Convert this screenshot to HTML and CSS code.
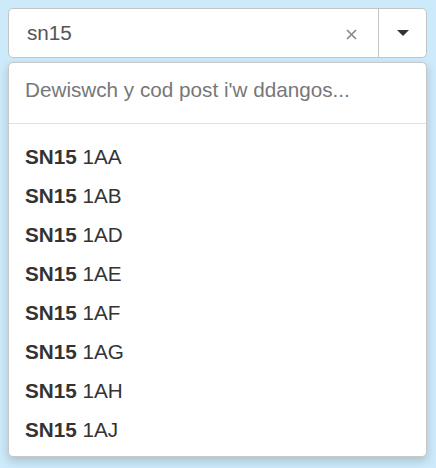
FILE: index.html
```html
<!DOCTYPE html>
<html>
<head>
<meta charset="utf-8">
<link rel="stylesheet" href="styles.css">
</head>
<body>
<div class="combo">
  <div class="field">
    <span class="value">sn15</span>
    <svg class="clear" width="11" height="11" viewBox="0 0 11 11" aria-label="clear"><path d="M1 1 L10 10 M10 1 L1 10" stroke="#8a8a8a" stroke-width="1.7" fill="none"/></svg>
  </div>
  <div class="toggle"><span class="caret"></span></div>
</div>
<div class="panel">
  <div class="search">Dewiswch y cod post i'w ddangos...</div>
  <ul class="list">
    <li><b>SN15</b> 1AA</li>
    <li><b>SN15</b> 1AB</li>
    <li><b>SN15</b> 1AD</li>
    <li><b>SN15</b> 1AE</li>
    <li><b>SN15</b> 1AF</li>
    <li><b>SN15</b> 1AG</li>
    <li><b>SN15</b> 1AH</li>
    <li><b>SN15</b> 1AJ</li>
  </ul>
</div>
</body>
</html>
```
FILE: styles.css
```css
html, body {
  margin: 0;
  padding: 0;
}
body {
  background: #cdeafa;
  padding: 8px 9px 0 8px;
  font-family: "Liberation Sans", Arial, sans-serif;
  font-size: 20.7px;
  color: #333;
  height: 468px;
  box-sizing: border-box;
}
.combo {
  display: flex;
  height: 50px;
  box-sizing: border-box;
  background: #fff;
  border: 1px solid #c4c4c4;
  border-radius: 5px;
}
.field {
  flex: 1;
  display: flex;
  align-items: center;
  padding: 0 21px 0 18px;
  border-right: 1px solid #c4c4c4;
}
.value {
  flex: 1;
  color: #555;
}
.clear {
  display: block;
  margin-top: 2px;
}
.toggle {
  width: 47px;
  display: flex;
  align-items: center;
  justify-content: center;
}
.caret {
  width: 0;
  height: 0;
  border-left: 6px solid transparent;
  border-right: 6px solid transparent;
  border-top: 6px solid #333;
}
.panel {
  margin-top: 4px;
  background: #fff;
  border: 1px solid #c8c8c8;
  border-radius: 5px;
  box-shadow: 0 4px 10px rgba(0, 0, 0, 0.18);
  height: 395px;
  box-sizing: border-box;
}
.search {
  height: 61px;
  box-sizing: border-box;
  display: flex;
  align-items: center;
  padding: 0 16px 6px 16px;
  color: #777;
  border-bottom: 1px solid #e0e0e0;
}
.list {
  list-style: none;
  margin: 0;
  padding: 13px 0 0 0;
}
.list li {
  padding: 9px 16px;
  line-height: 21px;
}
.list b {
  font-weight: bold;
}
```
